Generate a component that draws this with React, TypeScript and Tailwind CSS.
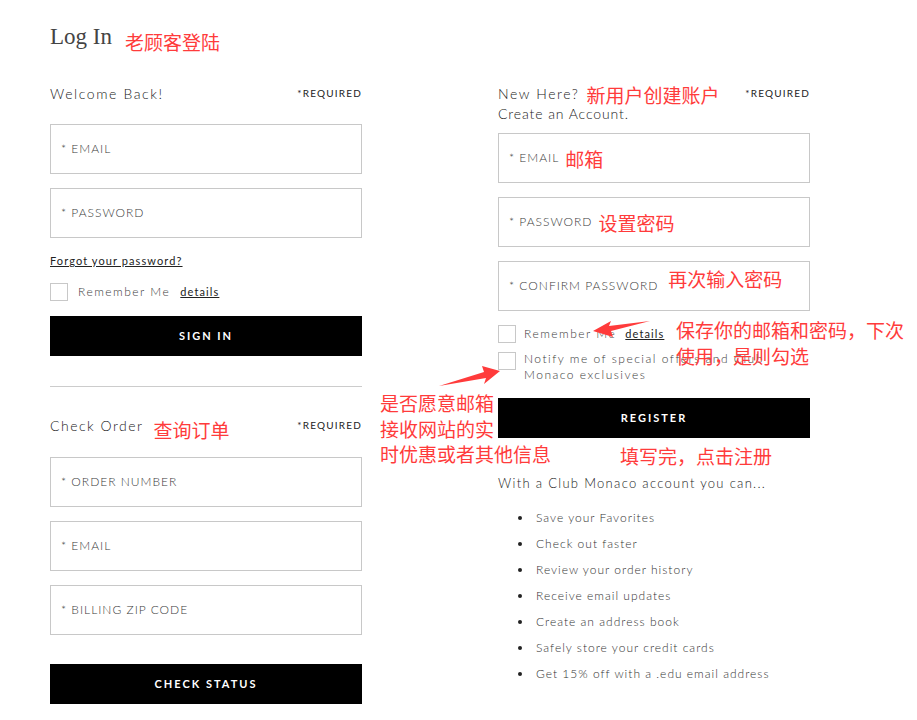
import React from "react";

const RED = "text-[#ff3b3b] [font-family:'Noto_Sans_CJK_SC',sans-serif] text-[19px]";

function Field({ label, note, noteClass }: { label: string; note?: string; noteClass?: string }) {
  return (
    <div className="h-[50px] border border-[#c8c8c8] flex items-center pl-[10px]">
      <span className="text-[12px] tracking-[1px] text-[#3a3a3a] font-light">* {label}</span>
      {note && <span className={`${RED} leading-none ${noteClass ?? "ml-[6px]"}`}>{note}</span>}
    </div>
  );
}

function Check() {
  return <div className="w-[18px] h-[18px] border border-[#c8c8c8] bg-white shrink-0" />;
}

function Btn({ children }: { children: React.ReactNode }) {
  return (
    <div className="h-[40px] bg-black flex items-center justify-center text-white text-[11px] font-bold tracking-[2px]">
      {children}
    </div>
  );
}

export default function App() {
  const perks = [
    "Save your Favorites",
    "Check out faster",
    "Review your order history",
    "Receive email updates",
    "Create an address book",
    "Safely store your credit cards",
    "Get 15% off with a .edu email address",
  ];
  return (
    <div className="relative w-[917px] h-[720px] bg-white overflow-hidden [font-family:Lato,sans-serif] text-[#222]">
      <div className="pl-[50px] pt-[22px] flex items-center h-[52px]">
        <span className="[font-family:'Liberation_Serif',serif] text-[23px] leading-[30px] text-[#444]">Log In</span>
        <span className={`${RED} leading-none ml-[13px] mt-[8px]`}>老顾客登陆</span>
      </div>

      <div className="pl-[50px] mt-[32px] grid grid-cols-[312px_312px] gap-x-[136px]">
        {/* Left column */}
        <div className="flex flex-col">
          <div className="h-[18px] flex items-center justify-between">
            <span className="text-[14px] tracking-[1.6px] font-light">Welcome Back!</span>
            <span className="text-[10px] tracking-[1.2px]">*REQUIRED</span>
          </div>
          <div className="mt-[22px] flex flex-col gap-[14px]">
            <Field label="EMAIL" />
            <Field label="PASSWORD" />
          </div>
          <div className="mt-[16px] h-[14px] flex items-center">
            <span className="text-[11px] tracking-[1.1px] underline text-[#222]">Forgot your password?</span>
          </div>
          <div className="mt-[15px] flex items-center">
            <Check />
            <span className="ml-[10px] text-[12px] tracking-[1.5px] text-[#3a3a3a] font-light">Remember Me</span>
            <span className="ml-[10px] text-[11px] tracking-[1.1px] underline text-[#222]">details</span>
          </div>
          <div className="mt-[15px]">
            <Btn>SIGN IN</Btn>
          </div>
          <div className="mt-[30px] h-px bg-[#cccccc]" />
          <div className="mt-[29px] h-[18px] flex items-center">
            <span className="text-[14px] tracking-[1.5px] font-light">Check Order</span>
            <span className={`${RED} leading-none ml-[10px] mt-[8px]`}>查询订单</span>
            <span className="ml-auto text-[10px] tracking-[1.2px]">*REQUIRED</span>
          </div>
          <div className="mt-[23px] flex flex-col gap-[14px]">
            <Field label="ORDER NUMBER" />
            <Field label="EMAIL" />
            <Field label="BILLING ZIP CODE" />
          </div>
          <div className="mt-[29px]">
            <Btn>CHECK STATUS</Btn>
          </div>
        </div>

        {/* Right column */}
        <div className="flex flex-col">
          <div className="h-[18px] flex items-center">
            <span className="text-[14px] tracking-[1.6px] font-light">New Here?</span>
            <span className={`${RED} leading-none ml-[7px] mt-[2px]`}>新用户创建账户</span>
            <span className="ml-auto text-[10px] tracking-[1.2px]">*REQUIRED</span>
          </div>
          <div className="mt-[2px] h-[18px] flex items-center">
            <span className="text-[14px] tracking-[0.9px] font-light">Create an Account.</span>
          </div>
          <div className="mt-[11px] flex flex-col gap-[14px]">
            <Field label="EMAIL" note="邮箱" />
            <Field label="PASSWORD" note="设置密码" />
            <Field label="CONFIRM PASSWORD" note="再次输入密码" noteClass="ml-[10px] -mt-[16px]" />
          </div>
          <div className="mt-[14px] flex items-center">
            <Check />
            <span className="ml-[8px] text-[12px] tracking-[1.5px] text-[#3a3a3a] font-light">Remember Me</span>
            <span className="ml-[9px] text-[11px] tracking-[1.1px] underline text-[#222]">details</span>
          </div>
          <div className="mt-[9px] flex items-start">
            <Check />
            <span className="ml-[8px] -mt-[1px] text-[12px] leading-[16px] tracking-[1.5px] text-[#3a3a3a] font-light">
              Notify me of special offers and Club
              <br />
              Monaco exclusives
            </span>
          </div>
          <div className="mt-[15px]">
            <Btn>REGISTER</Btn>
          </div>
          <div className={`${RED} leading-none mt-[8px] ml-[122px] h-[19px]`}>填写完，点击注册</div>
          <div className="mt-[10px] h-[18px] flex items-center">
            <span className="text-[13px] tracking-[1.3px] font-light">With a Club Monaco account you can...</span>
          </div>
          <ul className="mt-[12px] flex flex-col">
            {perks.map((p) => (
              <li key={p} className="h-[26px] flex items-center">
                <span className="ml-[20px] w-[4px] h-[4px] rounded-full bg-[#222]" />
                <span className="ml-[14px] text-[12px] tracking-[1px] text-[#333] font-light">{p}</span>
              </li>
            ))}
          </ul>
        </div>
      </div>

      {/* Annotations overlay */}
      <div className={`absolute left-[676px] top-[317px] ${RED} leading-[26px]`}>
        保存你的邮箱和密码，下次
        <br />
        使用，是则勾选
      </div>
      <div className={`absolute left-[380px] top-[390px] ${RED} leading-[25.5px]`}>
        是否愿意邮箱
        <br />
        接收网站的实
        <br />
        时优惠或者其他信息
      </div>
      <svg className="absolute left-0 top-0 pointer-events-none" width="917" height="720">
        <polygon points="593,331 611,321 609,326 650,321 611,331 613,337" fill="#ff3b3b" />
        <polygon points="500,371 482,366 484,372 439,386 486,378 484,384" fill="#ff3b3b" />
      </svg>
    </div>
  );
}
